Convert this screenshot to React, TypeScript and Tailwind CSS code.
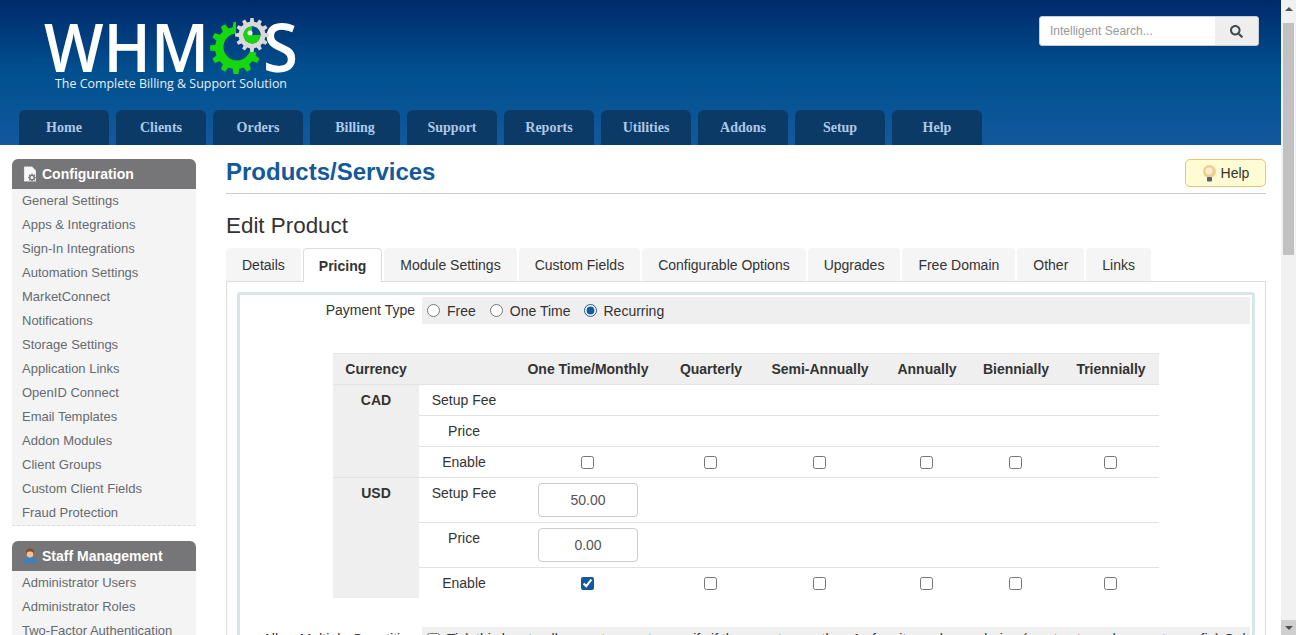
import React from "react";
import { FaSearch } from "react-icons/fa";

const navItems = ["Home", "Clients", "Orders", "Billing", "Support", "Reports", "Utilities", "Addons", "Setup", "Help"];
const configLinks = [
  "General Settings",
  "Apps & Integrations",
  "Sign-In Integrations",
  "Automation Settings",
  "MarketConnect",
  "Notifications",
  "Storage Settings",
  "Application Links",
  "OpenID Connect",
  "Email Templates",
  "Addon Modules",
  "Client Groups",
  "Custom Client Fields",
  "Fraud Protection",
];
const staffLinks = ["Administrator Users", "Administrator Roles", "Two-Factor Authentication"];
const productTabs = ["Details", "Pricing", "Module Settings", "Custom Fields", "Configurable Options", "Upgrades", "Free Domain", "Other", "Links"];
const cycles = ["One Time/Monthly", "Quarterly", "Semi-Annually", "Annually", "Biennially", "Triennially"];

// builds the outline of a cog, used for both wheels in the logo
function gearPath(cx: number, cy: number, rOut: number, rRoot: number, teeth: number) {
  const pts: string[] = [];
  const step = (Math.PI * 2) / teeth;
  for (let i = 0; i < teeth; i++) {
    const a = i * step;
    const corners: [number, number][] = [
      [rRoot, a - step * 0.3],
      [rOut, a - step * 0.18],
      [rOut, a + step * 0.18],
      [rRoot, a + step * 0.3],
    ];
    corners.forEach(([r, t]) => pts.push(`${(cx + r * Math.cos(t)).toFixed(2)} ${(cy + r * Math.sin(t)).toFixed(2)}`));
  }
  return "M" + pts.join("L") + "Z";
}

function circlePath(cx: number, cy: number, r: number) {
  return `M${cx - r} ${cy}a${r} ${r} 0 1 0 ${r * 2} 0a${r} ${r} 0 1 0 ${-r * 2} 0Z`;
}

function Logo() {
  return (
    <svg width="260" height="78" viewBox="40 16 260 78" className="block overflow-visible">
      <defs>
        <clipPath id="cgap">
          <path d="M236 48L300 62L300 100L180 100L180 0L236 0Z" />
        </clipPath>
      </defs>
      <text x="44" y="72" textLength="165" lengthAdjust="spacingAndGlyphs" fontFamily="'Open Sans', sans-serif" fontWeight="600" fontSize="67" fill="#fff">
        WHM
      </text>
      <text x="263" y="72" textLength="35" lengthAdjust="spacingAndGlyphs" fontFamily="'Open Sans', sans-serif" fontWeight="600" fontSize="67" fill="#fff">
        S
      </text>
      <path d={gearPath(236, 48, 26, 21, 12) + circlePath(237, 47, 13.5)} fill="#16d60c" fillRule="evenodd" clipPath="url(#cgap)" />
      <path d={gearPath(252, 35, 17, 13.5, 12) + circlePath(252, 35, 8.5)} fill="#d9d9d9" fillRule="evenodd" />
      <circle cx="252" cy="35" r="8.5" fill="#16d60c" />
      <path d="M252 35L252 26.5A8.5 8.5 0 0 1 260.5 35Z" fill="#0b4a86" />
      <circle cx="250" cy="33" r="2.5" fill="#f2f2f2" />
      <text x="55" y="88" textLength="232" lengthAdjust="spacingAndGlyphs" fontFamily="'Open Sans', sans-serif" fontWeight="400" fontSize="13" fill="#e8eff7">
        The Complete Billing &amp; Support Solution
      </text>
    </svg>
  );
}

function DocIcon() {
  return (
    <svg width="14" height="16" viewBox="0 0 14 16" className="shrink-0">
      <path d="M1 .5h8l4 4v11H1z" fill="#f7f7f7" stroke="#8a8a8a" strokeWidth="0.5" strokeDasharray="1 1" />
      <path d={gearPath(9, 11.500, 4, 3, 8) + circlePath(9, 11.500, 1.5)} fill="#77767a" fillRule="evenodd" />
    </svg>
  );
}

function PersonIcon() {
  return (
    <svg width="14" height="16" viewBox="0 0 14 16" className="shrink-0">
      <path d="M0 15.500c0-4 2-6 7-6s7 2 7 6z" fill="#3f7fc0" />
      <circle cx="7" cy="6" r="3.4" fill="#eec39a" />
      <path d="M3 6.500C2.500 2 5 .5 7 .5s4.500 1.500 4 6c-1-2.500-2-3-4-3s-3 .5-4 3z" fill="#8a4b26" />
    </svg>
  );
}

function BulbIcon() {
  return (
    <svg width="15" height="17" viewBox="0 0 15 17" className="shrink-0">
      <circle cx="7.500" cy="6.500" r="6.500" fill="#f3cd8e" />
      <circle cx="7" cy="6" r="3.500" fill="#fdf0cf" />
      <rect x="5" y="12" width="5" height="4.500" rx="1" fill="#5d5d6b" />
    </svg>
  );
}

function SideBox({ title, icon, links }: { title: string; icon: React.ReactNode; links: string[] }) {
  return (
    <div className="mb-[15px]">
      <div className="h-[30px] flex items-center gap-[5px] pl-[11px] rounded-t-[6px] bg-[#767578] text-white font-bold text-[14px]">
        {icon}
        <span>{title}</span>
      </div>
      <div className="bg-[#f4f4f4] border-b border-dashed border-[#dddddd]">
        {links.map((link) => (
          <div key={link} className="h-[24px] pl-[10px] leading-[24px] text-[13px] text-[#666a70]">
            {link}
          </div>
        ))}
      </div>
    </div>
  );
}

function CheckRow({ checked, border }: { checked?: boolean; border?: boolean }) {
  return (
    <>
      {cycles.map((c, i) => (
        <td key={c} className={`py-[5px] pr-[1px] align-middle ${border ? "border-b border-[#e2e2e2]" : ""}`}>
          <input type="checkbox" readOnly checked={!!checked && i === 0} className="block mx-auto w-[13px] h-[13px] accent-[#14599a]" />
        </td>
      ))}
    </>
  );
}

function App() {
  const line = "border-b border-[#e2e2e2]";
  return (
    <div className="h-[635px] overflow-hidden flex font-['Liberation_Sans',Arial,sans-serif] text-[14px] leading-[20px] text-[#333333] bg-white">
      <div className="w-[1281px] shrink-0">
        <header className="h-[145px] pt-[16px] bg-linear-to-b from-[#002a6b] via-[#00508f] to-[#12599d]">
          <div className="h-[94px] flex justify-between pl-[40px] pr-[22px]">
            <Logo />
            <div className="w-[220px] h-[30px] flex rounded-[3px] border border-[#c6ccd4] overflow-hidden bg-white">
              <div className="w-[175px] pl-[10px] leading-[28px] text-[12px] text-[#999999]">Intelligent Search...</div>
              <div className="flex-1 bg-[#eeeeee] flex items-center justify-center text-[#444a52] text-[13px]">
                <FaSearch />
              </div>
            </div>
          </div>
          <nav className="flex gap-[7px] pl-[19px]">
            {navItems.map((item) => (
              <div key={item} className="w-[90px] h-[35px] rounded-t-[6px] bg-[#0b3a66] text-center leading-[35px] font-['Liberation_Serif',serif] font-bold text-[14px] text-[#aec8e6]">
                {item}
              </div>
            ))}
          </nav>
        </header>

        <div className="flex pt-[14px]">
          <aside className="w-[184px] ml-[12px] shrink-0">
            <SideBox title="Configuration" icon={<DocIcon />} links={configLinks} />
            <SideBox title="Staff Management" icon={<PersonIcon />} links={staffLinks} />
          </aside>

          <main className="w-[1040px] ml-[30px] shrink-0">
            <div className="h-[35px] flex justify-between items-start border-b border-[#cccccc]">
              <h1 className="text-[24px] leading-[26px] font-bold text-[#14599a]">Products/Services</h1>
              <div className="w-[81px] h-[28px] flex items-center justify-center gap-[4px] rounded-[5px] border border-[#e8c478] bg-[#fffbd2]">
                <BulbIcon />
                <span>Help</span>
              </div>
            </div>

            <h2 className="mt-[18px] mb-[9px] text-[22.4px] leading-[27px] text-[#333333]">Edit Product</h2>

            <div className="flex gap-[2px] h-[34px] relative z-10">
              {productTabs.map((tab) =>
                tab === "Pricing" ? (
                  <div key={tab} className="px-[15px] h-[34px] leading-[34px] bg-white border border-b-0 border-[#dddddd] rounded-t-[4px] font-bold">
                    {tab}
                  </div>
                ) : (
                  <div key={tab} className="px-[16px] h-[33px] leading-[35px] bg-[#f5f5f5] rounded-t-[4px]">
                    {tab}
                  </div>
                )
              )}
            </div>

            <div className="border border-[#dddddd] -mt-px pt-[10px] px-[10px] h-[400px]">
              <div className="border-[3px] border-[#d9e5e9] rounded-[3px] p-[2px] w-[1018px] h-[400px]">
                <div className="grid grid-cols-[180px_1fr]">
                  <div className="pr-[7px] text-right leading-[26px]">Payment Type</div>
                  <div className="h-[27px] bg-[#efefef] flex items-center pl-[5px]">
                    <label className="flex items-center gap-[7px] mr-[14px]">
                      <input type="radio" name="ptype" readOnly className="w-[13px] h-[13px] accent-[#14599a]" />
                      Free
                    </label>
                    <label className="flex items-center gap-[7px] mr-[13px]">
                      <input type="radio" name="ptype" readOnly className="w-[13px] h-[13px] accent-[#14599a]" />
                      One Time
                    </label>
                    <label className="flex items-center gap-[7px]">
                      <input type="radio" name="ptype" readOnly checked className="w-[13px] h-[13px] accent-[#14599a]" />
                      Recurring
                    </label>
                  </div>
                </div>

                <table className="mt-[29px] ml-[91px] w-[826px] table-fixed border-separate border-spacing-0">
                  <colgroup>
                    <col className="w-[86px]" />
                    <col className="w-[90px]" />
                    <col className="w-[158px]" />
                    <col className="w-[88px]" />
                    <col className="w-[130px]" />
                    <col className="w-[84px]" />
                    <col className="w-[94px]" />
                    <col className="w-[96px]" />
                  </colgroup>
                  <thead>
                    <tr className="bg-[#efefef] text-center font-bold">
                      <th className="h-[32px] border-y border-[#e4e4e4]">Currency</th>
                      <th className="border-y border-[#e4e4e4]"></th>
                      {cycles.map((c) => (
                        <th key={c} className="border-y border-[#e4e4e4] whitespace-nowrap">
                          {c}
                        </th>
                      ))}
                    </tr>
                  </thead>
                  <tbody>
                    <tr>
                      <td rowSpan={3} className={`bg-[#efefef] text-center align-top font-bold py-[5px] ${line}`}>CAD</td>
                      <td className={`py-[5px] text-center ${line}`}>Setup Fee</td>
                      <td colSpan={6} className={line}></td>
                    </tr>
                    <tr>
                      <td className={`py-[5px] text-center ${line}`}>Price</td>
                      <td colSpan={6} className={line}></td>
                    </tr>
                    <tr>
                      <td className={`py-[5px] text-center ${line}`}>Enable</td>
                      <CheckRow border />
                    </tr>
                    <tr>
                      <td rowSpan={3} className="bg-[#efefef] text-center align-top font-bold py-[5px]">USD</td>
                      <td className={`py-[5px] text-center align-top ${line}`}>Setup Fee</td>
                      <td className={`py-[5px] text-center ${line}`}>
                        <input readOnly value="50.00" className="w-[100px] h-[34px] rounded-[4px] border border-[#cccccc] text-center text-[#555555]" />
                      </td>
                      <td colSpan={5} className={line}></td>
                    </tr>
                    <tr>
                      <td className={`py-[5px] text-center align-top ${line}`}>Price</td>
                      <td className={`py-[5px] text-center ${line}`}>
                        <input readOnly value="0.00" className="w-[100px] h-[34px] rounded-[4px] border border-[#cccccc] text-center text-[#555555]" />
                      </td>
                      <td colSpan={5} className={line}></td>
                    </tr>
                    <tr>
                      <td className="py-[5px] text-center">Enable</td>
                      <CheckRow checked />
                    </tr>
                  </tbody>
                </table>

                <div className="mt-[29px] grid grid-cols-[180px_1fr]">
                  <div className="pr-[7px] pt-[2px] text-right whitespace-nowrap">Allow Multiple Quantities</div>
                  <div className="h-[30px] bg-[#efefef] flex items-start gap-[7px] pl-[5px] pt-[2px] overflow-hidden whitespace-nowrap">
                    <input type="checkbox" readOnly className="w-[13px] h-[13px] mt-[4px] shrink-0" />
                    <span>Tick this box to allow customers to specify if they want more than 1 of an item when ordering (must not need separate config) Only</span>
                  </div>
                </div>
              </div>
            </div>
          </main>
        </div>
      </div>

      <div className="w-[15px] shrink-0 bg-[#f1f1f1] flex flex-col items-center">
        <div className="h-[17px] flex items-center justify-center">
          <div className="w-0 h-0 border-x-[4px] border-x-transparent border-b-[4px] border-b-[#505050]"></div>
        </div>
        <div className="mt-[6px] w-[11px] h-[232px] bg-[#c1c1c1]"></div>
        <div className="flex-1"></div>
        <div className="h-[15px] w-full bg-[#cfcfcf] flex items-center justify-center">
          <div className="w-0 h-0 border-x-[4px] border-x-transparent border-t-[4px] border-t-[#505050]"></div>
        </div>
      </div>
    </div>
  );
}

export default App;
